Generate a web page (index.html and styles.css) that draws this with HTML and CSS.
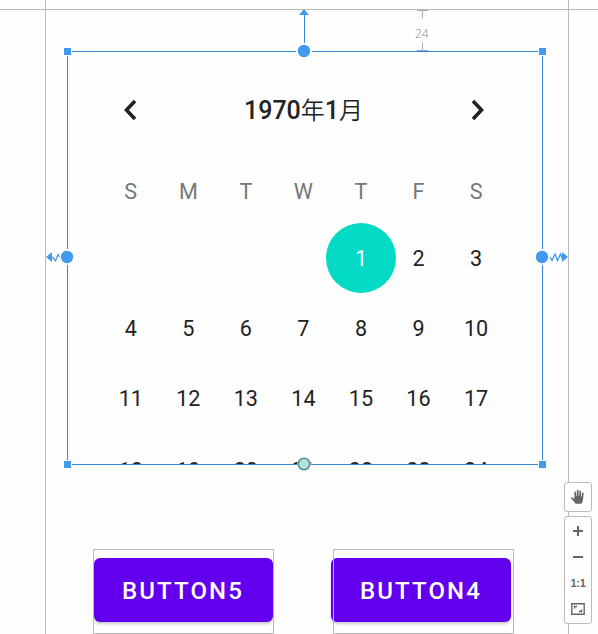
FILE: index.html
```html
<!DOCTYPE html>
<html lang="ja">
<head>
<meta charset="utf-8">
<title>Layout editor</title>
<link rel="stylesheet" href="styles.css">
</head>
<body>
<main class="canvas">
  <div class="artboard"></div>
  <section class="calendar">
    <header class="month">
      <svg class="chevron" viewBox="0 0 16 24"><path d="M13 3 4.500 12l8.500 9"/></svg>
      <h1 class="title">1970<span class="kanji">年</span>1<span class="kanji">月</span></h1>
      <svg class="chevron" viewBox="0 0 16 24"><path d="m3 3 8.500 9-8.500 9"/></svg>
    </header>
    <div class="week names"><span>S</span><span>M</span><span>T</span><span>W</span><span>T</span><span>F</span><span>S</span></div>
    <div class="week"><span></span><span></span><span></span><span></span><span class="selected">1</span><span>2</span><span>3</span></div>
    <div class="week"><span>4</span><span>5</span><span>6</span><span>7</span><span>8</span><span>9</span><span>10</span></div>
    <div class="week"><span>11</span><span>12</span><span>13</span><span>14</span><span>15</span><span>16</span><span>17</span></div>
    <div class="week last"><span>18</span><span>19</span><span>20</span><span>21</span><span>22</span><span>23</span><span>24</span></div>
  </section>
  <div class="actions">
    <div class="outline"><button class="button">BUTTON5</button></div>
    <div class="outline shifted"><button class="button">BUTTON4</button></div>
  </div>

  <!-- Selection handles and constraint connectors -->
  <svg class="overlay" viewBox="0 0 598 634">
    <g class="gap"><path d="M63 47h9v9h-9zM538 47h9v9h-9zM63 460h9v9h-9zM538 460h9v9h-9z"/><circle cx="304" cy="51" r="8"/><circle cx="67" cy="257" r="8"/><circle cx="542" cy="257" r="8"/></g>
    <path class="handle" d="M64 48h7v7h-7zM539 48h7v7h-7zM64 461h7v7h-7zM539 461h7v7h-7z"/>
    <path class="link" d="M304.500 14v29"/>
    <path class="handle" d="m304 9 5 6h-10zM46 257l6-5v10zM568 257l-6-5v10z"/>
    <circle class="handle" cx="304" cy="51" r="6.200"/>
    <circle class="handle" cx="67" cy="257" r="6.200"/>
    <circle class="handle" cx="542" cy="257" r="6.200"/>
    <path class="spring" d="M51 257.500h2l2.500 3.500 2.500-6.500 1.500 2.500M550 257l2 3.500 3-6.500 2.500 6.500 3-6.500 2 5"/>
    <circle class="baseline-halo" cx="304" cy="464" r="7"/>
    <circle class="baseline" cx="304" cy="464" r="5.600"/>
    <path class="measure" d="M417 10.500h11M422.500 10.500v8M422.500 42.500v8"/>
    <path class="measure-end" d="M417 50.500h11"/>
  </svg>
  <span class="distance">24</span>

  <aside class="tools">
    <div class="tool-group pan">
      <svg class="hand" viewBox="0 0 16 16"><path d="M5.700 14.800 1.300 9.600c-.6-.8.4-1.800 1.300-1.100L4.400 10V3.200c0-1.100 1.600-1.100 1.700 0L6.400 7h.5V1.600c0-1.100 1.700-1.100 1.700 0V7h.5l.4-4.700c.1-1 1.700-.9 1.600.1L11 7.400h.5l.7-3.300c.2-1 1.600-.7 1.500.3l-.8 6.900c-.1 1.600-.8 2.700-1.600 3.500z"/></svg>
    </div>
    <div class="tool-group zoom">
      <svg class="glyph" viewBox="0 0 12 12"><path d="M1 6h10M6 1v10"/></svg>
      <svg class="glyph" viewBox="0 0 12 12"><path d="M1 6h10"/></svg>
      <span class="ratio">1:1</span>
      <svg class="fit" viewBox="0 0 14 12"><path d="M.8.800h12.400v10.400H.8z"/><path d="M3.500 5.500v-2h2.500M8 8.500h2.500v-2"/></svg>
    </div>
  </aside>
</main>
</body>
</html>
```
FILE: styles.css
```css
* { box-sizing: border-box; }

body {
  margin: 0;
  background: #fefefe;
  font-family: Roboto, "Noto Sans CJK JP", sans-serif;
  color: #222;
}

.canvas {
  position: relative;
  height: 634px;
  overflow: hidden;
  padding: 51px 55px 0 67px;
}

/* Artboard edges extend past its corners as guides */
.artboard {
  position: absolute;
  inset: 0 29px 0 45px;
  border: solid #bbb;
  border-width: 0 1px;
}

.artboard::before {
  content: "";
  position: absolute;
  top: 9px;
  left: -46px;
  right: -30px;
  height: 1px;
  background: #bbb;
}

.calendar {
  position: relative;
  height: 414px;
  border: 1px solid #3585d1;
  padding: 34px 32px 0 34px;
  overflow: hidden;
}

.month {
  display: flex;
  align-items: center;
  justify-content: space-between;
  height: 48px;
  padding: 0 24px 0 20px;
}

.title {
  margin: 2px 1px 0 0;
  font-size: 25px;
  line-height: 46px;
  font-weight: 500;
}

.kanji {
  font-size: 24px;
  font-weight: 350;
}

.chevron {
  width: 16px;
  height: 24px;
  fill: none;
  stroke: #222;
  stroke-width: 3.600;
}

.week {
  display: grid;
  grid-template-columns: repeat(7, 57.550px);
  height: 70.300px;
  place-items: center;
  font-size: 21.600px;
}

.names {
  height: 54px;
  margin: 30px 0 5px;
  color: #777;
}

.last { padding-top: 3px; }

.selected {
  display: grid;
  place-items: center;
  width: 70px;
  height: 70px;
  border-radius: 50%;
  background: #03dac5;
  color: #fff;
}

.actions {
  display: flex;
  gap: 59px;
  margin: 84px 0 0 26px;
}

.outline {
  position: relative;
  width: 181px;
  height: 85px;
  padding: 9px 1px;
}

.outline::after {
  content: "";
  position: absolute;
  inset: 0;
  border: 1px solid #bbb;
}

.shifted .button { margin-left: -3px; width: 180px; padding-left: 1px; }

.button {
  display: block;
  width: 179px;
  height: 64px;
  padding: 2px 1px 0 0;
  border: 0;
  border-radius: 6px;
  background: #6200ee;
  color: #fff;
  font: 500 24px Roboto, sans-serif;
  letter-spacing: 2.100px;
  box-shadow: 0 2px 3px #0003;
}

.overlay {
  position: absolute;
  inset: 0;
  width: 598px;
  height: 634px;
  fill: none;
}

.gap { fill: #fefefe; }
.handle { fill: #439aec; }
.link { stroke: #3585d1; }
.spring { stroke: #439aec; stroke-width: 1.300; }
.baseline-halo { fill: #bde5dc; }
.baseline { fill: #b6e1d5; stroke: #48838c; stroke-width: 1.300; }
.measure { stroke: #aaa; }
.measure-end { stroke: #79aeef; }

.distance {
  position: absolute;
  top: 27px;
  left: 415px;
  font: 300 12px/14px "Open Sans", sans-serif;
  color: #888;
}

.tools {
  position: absolute;
  top: 482px;
  left: 564px;
  display: grid;
  gap: 4px;
  width: 28px;
}

.tool-group {
  display: flex;
  flex-direction: column;
  align-items: center;
  border: 1px solid #bbb;
  border-radius: 3px;
  background: #fefefe;
}

.pan { height: 30px; justify-content: center; }
.zoom { height: 108px; padding-top: 8px; gap: 14px; }
.hand { width: 16px; height: 16px; fill: #666; }

.glyph {
  width: 12px;
  height: 12px;
  fill: none;
  stroke: #666;
  stroke-width: 2;
}

.ratio {
  height: 12px;
  font: 700 11px/12px "Liberation Sans", sans-serif;
  letter-spacing: -0.300px;
  color: #666;
}

.fit {
  width: 14px;
  height: 12px;
  fill: none;
  stroke: #666;
  stroke-width: 1.400;
}
```
